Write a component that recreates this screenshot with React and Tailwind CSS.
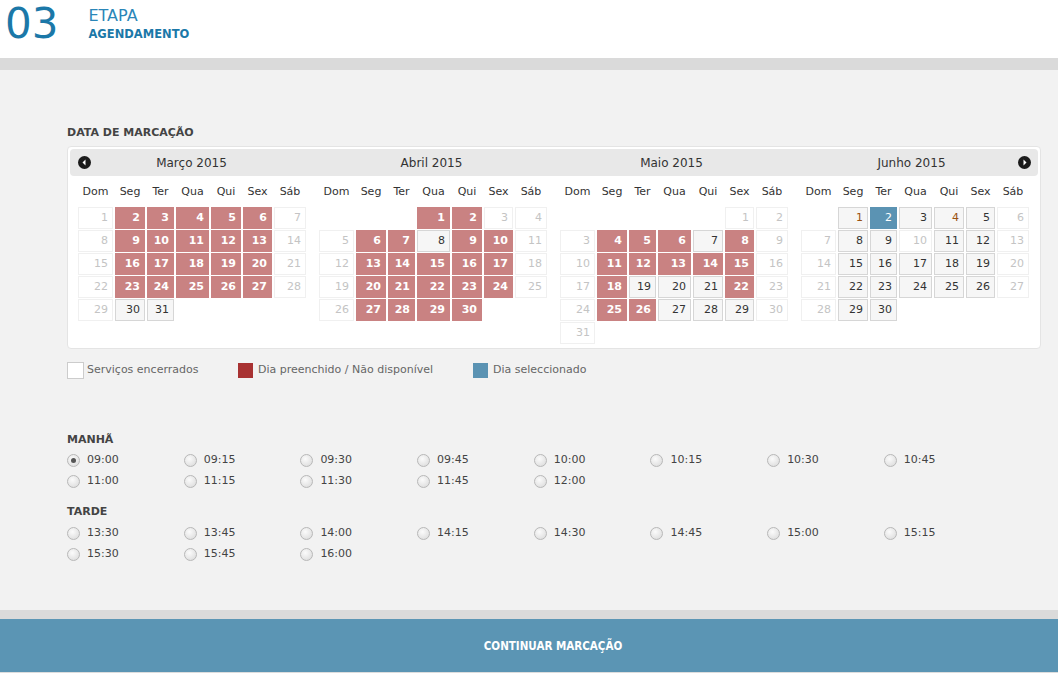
import React from 'react';

const diasSemana = ['Dom', 'Seg', 'Ter', 'Qua', 'Qui', 'Sex', 'Sáb'];

const range = (a, b) => Array.from({ length: b - a + 1 }, (_, i) => a + i);

const meses = [
    {
        nome: 'Março 2015', inicio: 0, dias: 31,
        red: [...range(2, 6), ...range(9, 13), ...range(16, 20), ...range(23, 27)],
        livre: [30, 31],
    },
    {
        nome: 'Abril 2015', inicio: 3, dias: 30,
        red: [1, 2, 6, 7, 9, 10, ...range(13, 17), ...range(20, 24), ...range(27, 30)],
        livre: [8],
    },
    {
        nome: 'Maio 2015', inicio: 5, dias: 31,
        red: [4, 5, 6, 8, ...range(11, 15), 18, 22, 25, 26],
        livre: [7, 19, 20, 21, 27, 28, 29],
    },
    {
        nome: 'Junho 2015', inicio: 1, dias: 30,
        red: [],
        livre: [1, 3, 4, 5, 8, 9, 11, 12, ...range(15, 19), ...range(22, 26), 29, 30],
        sel: [2],
        feriado: [1, 4],
    },
];

const manha = ['09:00', '09:15', '09:30', '09:45', '10:00', '10:15', '10:30', '10:45', '11:00', '11:15', '11:30', '11:45', '12:00'];
const tarde = ['13:30', '13:45', '14:00', '14:15', '14:30', '14:45', '15:00', '15:15', '15:30', '15:45', '16:00'];

function Dia({ dia, mes }) {
    if (!dia) return <div className="h-[22px]"></div>;
    const base = 'h-[22px] border text-right pr-[4px] leading-[20px] text-[11px]';
    if (mes.sel && mes.sel.includes(dia)) {
        return <div className={`${base} bg-[#5b93b3] border-[#5b93b3] text-white`}>{dia}</div>;
    }
    if (mes.red.includes(dia)) {
        return <div className={`${base} bg-[#c98282] border-[#c98282] text-white font-bold`}>{dia}</div>;
    }
    if (mes.livre.includes(dia)) {
        const cor = mes.feriado && mes.feriado.includes(dia) ? 'text-[#9a5312]' : 'text-[#333]';
        return <div className={`${base} bg-[#f6f6f6] border-[#d6d6d6] ${cor}`}>{dia}</div>;
    }
    return <div className={`${base} bg-white border-[#f0f0f0] text-[#c4c4c4]`}>{dia}</div>;
}

function Mes({ mes }) {
    const celulas = [...Array(mes.inicio).fill(null), ...range(1, mes.dias)];
    return (
        <div className="w-[228px]">
            <div className="grid grid-cols-[35px_30px_27px_33px_30px_29px_32px] gap-x-[2px] h-[20px] mt-[6px] items-center">
                {diasSemana.map((d) => (
                    <div key={d} className="text-center text-[11px] text-[#333]">{d}</div>
                ))}
            </div>
            <div className="grid grid-cols-[35px_30px_27px_33px_30px_29px_32px] gap-x-[2px] gap-y-px mt-[5px]">
                {celulas.map((d, i) => <Dia key={i} dia={d} mes={mes} />)}
            </div>
        </div>
    );
}

function Radio({ hora, marcado }) {
    return (
        <div className="flex items-center h-[21px]">
            <div className="w-[13px] h-[13px] rounded-full border border-[#b8b8b8] bg-[radial-gradient(circle_at_40%_35%,#fbfbfb,#d8d8d8)] flex items-center justify-center">
                {marcado && <div className="w-[5px] h-[5px] rounded-full bg-[#555]"></div>}
            </div>
            <span className="ml-[7px] text-[11px] text-[#444]">{hora}</span>
        </div>
    );
}

function Setas({ dir }) {
    return (
        <svg width="13" height="13" viewBox="0 0 13 13">
            <circle cx="6.5" cy="6.5" r="6.5" fill="#1a1a1a" />
            {dir === 'left'
                ? <path d="M7.5 3.5 L4.5 6.5 L7.5 9.5 Z" fill="#fff" />
                : <path d="M5.5 3.5 L8.5 6.5 L5.5 9.5 Z" fill="#fff" />}
        </svg>
    );
}

export default function App() {
    return (
        <div className="w-[1058px] h-[673px] bg-white font-['DejaVu_Sans',sans-serif] flex flex-col">
            {/* Cabeçalho da etapa */}
            <div className="h-[58px] bg-white flex items-start">
                <div className="ml-[5px] mt-[3px] text-[42px] leading-none text-[#1b78a8]">03</div>
                <div className="ml-[30px] mt-[8px] flex flex-col">
                    <span className="text-[16px] leading-none text-[#2a86b8]">ETAPA</span>
                    <span className="mt-[5px] text-[11.5px] leading-none font-bold text-[#1b78a8]">AGENDAMENTO</span>
                </div>
            </div>
            <div className="h-[12px] bg-[#dadada]"></div>

            <div className="h-[540px] bg-[#f2f2f2] pl-[67px] pt-[56px]">
                <div className="text-[11px] leading-[14px] font-bold text-[#444]">DATA DE MARCAÇÃO</div>

                {/* Calendário */}
                <div className="mt-[6px] w-[974px] bg-white border border-[#e4e4e4] rounded-[4px] p-[2px] pb-[4px]">
                    <div className="relative h-[27px] bg-[#e8e8e8] rounded-[4px] flex items-center pl-[8px] pt-[1px]">
                        <div className="absolute left-[8px] top-[7px]"><Setas dir="left" /></div>
                        <div className="absolute right-[7px] top-[7px]"><Setas dir="right" /></div>
                        {meses.map((m) => (
                            <div key={m.nome} className="w-[228px] mr-[13px] text-center text-[12px] text-[#333]">{m.nome}</div>
                        ))}
                    </div>
                    <div className="flex items-start pl-[8px] gap-[13px]">
                        {meses.map((m) => <Mes key={m.nome} mes={m} />)}
                    </div>
                </div>

                {/* Legenda */}
                <div className="mt-[12px] flex items-center h-[18px] text-[11px] text-[#666]">
                    <div className="w-[171px] flex items-center">
                        <div className="w-[17px] h-[17px] bg-white border border-[#cccccc]"></div>
                        <span className="ml-[3px]">Serviços encerrados</span>
                    </div>
                    <div className="w-[235px] flex items-center">
                        <div className="w-[15px] h-[15px] bg-[#a83232]"></div>
                        <span className="ml-[5px]">Dia preenchido / Não disponível</span>
                    </div>
                    <div className="flex items-center">
                        <div className="w-[15px] h-[15px] bg-[#5b93b3]"></div>
                        <span className="ml-[5px]">Dia seleccionado</span>
                    </div>
                </div>

                {/* Horários */}
                <div className="mt-[53px] text-[11px] leading-[16px] font-bold text-[#444]">MANHÃ</div>
                <div className="mt-[2px] grid grid-cols-[repeat(8,116.7px)]">
                    {manha.map((h, i) => <Radio key={h} hora={h} marcado={i === 0} />)}
                </div>
                <div className="mt-[12px] text-[11px] leading-[16px] font-bold text-[#444]">TARDE</div>
                <div className="mt-[3px] grid grid-cols-[repeat(8,116.7px)]">
                    {tarde.map((h) => <Radio key={h} hora={h} />)}
                </div>
            </div>

            <div className="h-[9px] bg-[#dadada]"></div>
            <div className="h-[53px] bg-[#5b95b4] flex items-center justify-center pl-[48px] pt-[3px]">
                <span className="font-['DejaVu_Sans_Condensed',sans-serif] font-bold text-[11.5px] text-white">CONTINUAR MARCAÇÃO</span>
            </div>
            <div className="h-px bg-[#dddddd]"></div>
        </div>
    );
}
